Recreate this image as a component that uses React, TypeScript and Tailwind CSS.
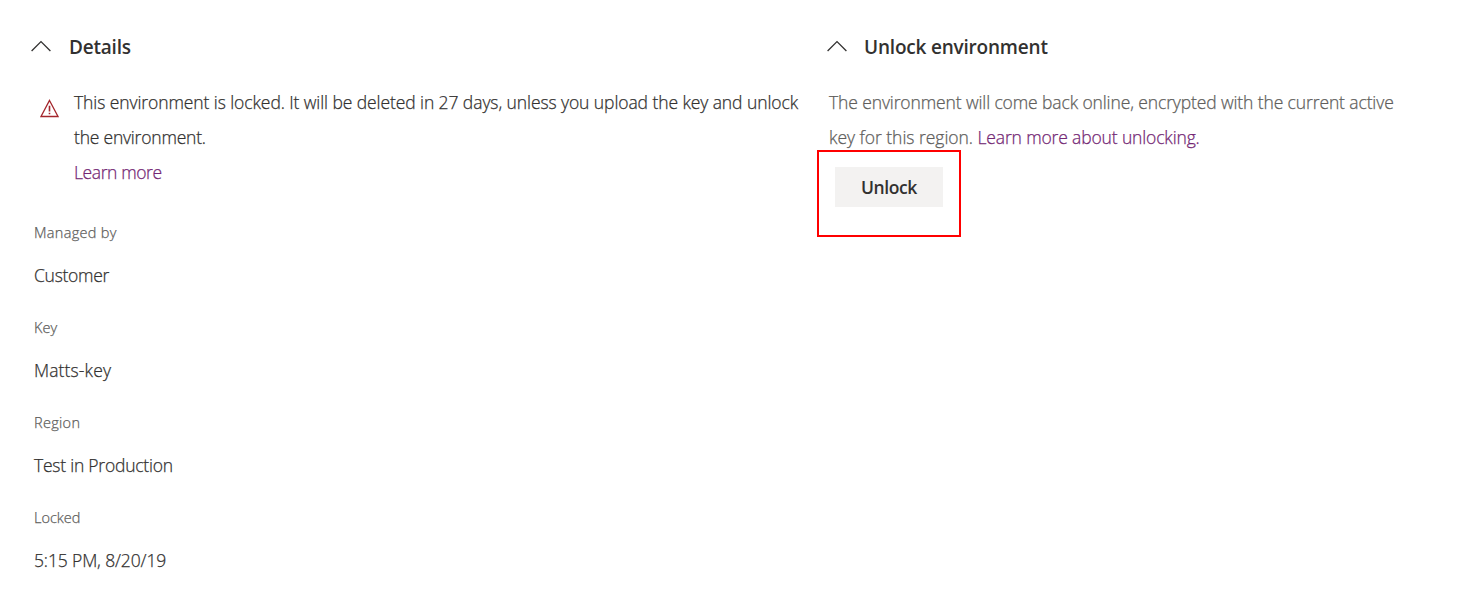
import React from "react";

function ChevronUp() {
  return (
    <svg width="20" height="12" viewBox="0 0 20 12" className="shrink-0" fill="none" stroke="#323130" strokeWidth="1.3">
      <path d="M0.6 11 L10 1.6 L19.4 11" />
    </svg>
  );
}

function Warning() {
  return (
    <svg width="19" height="19" viewBox="0 0 19 19" className="shrink-0" fill="none" stroke="#a4262c" strokeWidth="1.3">
      <path d="M9.5 1.5 L18 17.5 H1 Z" />
      <path d="M9.5 6.8 V12.6 M9.5 13.8 V15.2" strokeWidth="1.6" />
    </svg>
  );
}

const fields = [
  { label: "Managed by", value: "Customer", labelClass: "tracking-[0.3px]", valueClass: "tracking-[-0.28px]" },
  { label: "Key", value: "Matts-key", labelClass: "tracking-[0px]", valueClass: "tracking-[0.12px]" },
  { label: "Region", value: "Test in Production", labelClass: "tracking-[0.3px]", valueClass: "tracking-[-0.23px]" },
  { label: "Locked", value: "5:15 PM, 8/20/19", labelClass: "tracking-[0px]", valueClass: "tracking-[-0.13px]" },
];

export default function App() {
  return (
    <main className="flex h-[589px] w-[1478px] overflow-hidden bg-white font-['Open_Sans','Noto_Sans',sans-serif] text-[17.5px] font-light text-[#323130]">
      <section className="w-[817px] shrink-0 pl-[31.5px]">
        <header className="flex h-[85px] items-start gap-[18px] pt-[32px]">
          <div className="-ml-px pt-[8px] pl-[0.5px]"><ChevronUp /></div>
          <h2 className="text-[19px] leading-[30px] font-semibold tracking-[-0.2px]">Details</h2>
        </header>
        <div className="flex pl-[8.5px] [-webkit-text-stroke:0.25px]">
          <div className="w-[34px] shrink-0 pt-[14px]"><Warning /></div>
          <div className="leading-[35px] whitespace-nowrap">
            <p><span className="tracking-[-0.088px]">This environment is locked. It will be deleted in 27 days, unless you upload the key and unlock</span><br /><span className="tracking-[-0.21px]">the environment.</span></p>
            <a className="block tracking-[-0.4px] text-[#742774]">Learn more</a>
          </div>
        </div>
        <dl className="pt-[23px] pl-[2.5px] [-webkit-text-stroke:0.25px]">
          {fields.map((f) => (
            <div key={f.label} className="h-[95px]">
              <dt className={`text-[14.5px] leading-[40px] text-[#605e5c] ${f.labelClass}`}>{f.label}</dt>
              <dd className={`leading-[45px] ${f.valueClass}`}>{f.value}</dd>
            </div>
          ))}
        </dl>
      </section>
      <section className="flex-1">
        <header className="flex h-[85px] items-start gap-[17px] pt-[32px] pl-[10px]">
          <div className="pt-[8px]"><ChevronUp /></div>
          <h2 className="text-[19px] leading-[30px] font-semibold tracking-[-0.2px]">Unlock environment</h2>
        </header>
        <p className="h-[65px] pl-3 leading-[35px] tracking-[-0.118px] whitespace-nowrap text-[#605e5c] [-webkit-text-stroke:0.25px]">
          <span>The environment will come back online, encrypted with the current active</span><br />
          <span className="tracking-[-0.03px]">key for this region. </span><a className="tracking-[-0.15px] text-[#742774]">Learn more about unlocking.</a>
        </p>
        <div className="h-[87px] w-[144px] border-2 border-[#f00] pt-[15px] pl-4">
          <button className="h-10 w-[108px] bg-[#f3f2f1] pt-px text-[17.5px] font-semibold tracking-[-0.4px]">Unlock</button>
        </div>
      </section>
    </main>
  );
}
